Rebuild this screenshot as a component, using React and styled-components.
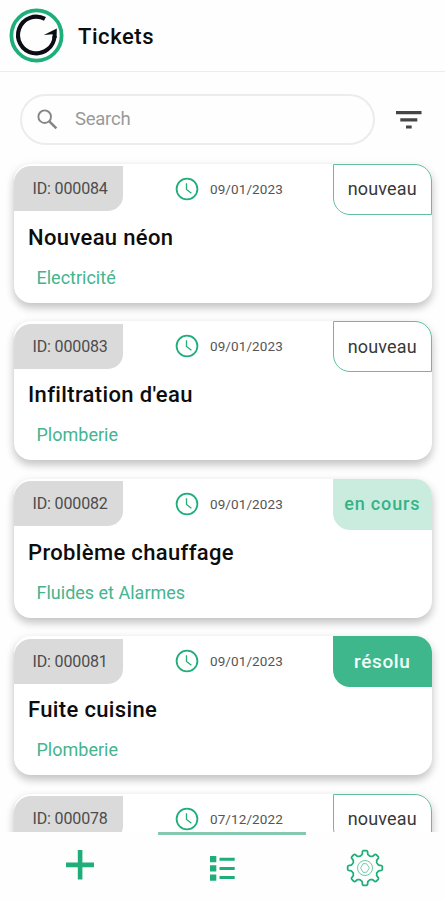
import React from 'react'
import styled, { createGlobalStyle, css } from 'styled-components'

const colors = {
	green: '#1fae7a',
	badgeGreen: '#3fb78c',
	paleGreen: '#caecdf',
	line: '#ececec',
	chip: '#dadada',
	black: '#0d0d0d'
}

const tickets = [
	{ id: '000084', date: '09/01/2023', title: 'Nouveau néon', category: 'Electricité', status: 'nouveau' },
	{ id: '000083', date: '09/01/2023', title: "Infiltration d'eau", category: 'Plomberie', status: 'nouveau' },
	{ id: '000082', date: '09/01/2023', title: 'Problème chauffage', category: 'Fluides et Alarmes', status: 'en cours' },
	{ id: '000081', date: '09/01/2023', title: 'Fuite cuisine', category: 'Plomberie', status: 'résolu' },
	{ id: '000078', date: '07/12/2022', status: 'nouveau' }
]

const Logo = () => (
	<svg width="55" height="55" viewBox="0 0 55 55" fill="none">
		<circle cx="27.5" cy="27.5" r="25.1" stroke={colors.green} strokeWidth="3.8" />
		<path d="M36 10.9A18.3 18.3 0 1 0 45.6 28" stroke="#0c0c14" strokeWidth="4.1" />
		<path d="M34.8 27 47.8 20.6 47.6 30h-4.1l.1-3.8z" fill="#0c0c14" />
	</svg>
)

const SearchIcon = () => (
	<svg width="21" height="21" viewBox="0 0 21 21" fill="none" stroke="#858585">
		<circle cx="7.7" cy="7.7" r="6.3" strokeWidth="1.9" />
		<path d="M12.3 12.3 19.4 19.4" strokeWidth="2.5" />
	</svg>
)

const FilterIcon = () => (
	<svg width="26" height="18" viewBox="0 0 26 18" fill="#454545">
		<path d="M0 0h25.5v3.2H0zM4.3 7.2h17v3.2h-17zM10 14.5h5.7v3.1H10z" />
	</svg>
)

const ClockIcon = () => (
	<svg width="24" height="24" viewBox="0 0 24 24" fill="none" stroke={colors.green}>
		<circle cx="12" cy="12" r="10.4" strokeWidth="1.8" />
		<path d="M11.5 6.2v6.2l4.9 3.8" strokeWidth="1.3" />
	</svg>
)

const PlusIcon = () => (
	<svg width="28" height="30" viewBox="0 0 28 30" fill={colors.green}>
		<path d="M11.8 0h4.6v12.4H28v4.8H16.4v12.3h-4.6V17.2H0v-4.8h11.8z" />
	</svg>
)

const ListIcon = () => (
	<svg width="25" height="25" viewBox="0 0 25 25" fill={colors.green}>
		<path d="M0 0h6.3v6.3H0zM0 9.3h6.3v6.3H0zM0 18.4h6.3v6.3H0z" />
		<path d="M9.5 1.7h15.2v3H9.5zM9.5 10.9h15.2v3H9.5zM9.5 20h15.2v3H9.5z" />
	</svg>
)

// one tooth for each 45 degrees, in polar coordinates
const gearPath = [0, 45, 90, 135, 180, 225, 270, 315].map((angle, i) => {
	const p = (r, offset) => {
		const a = ((angle + offset) * Math.PI) / 180
		return `${(r * Math.sin(a)).toFixed(2)} ${(-r * Math.cos(a)).toFixed(2)}`
	}
	return `${i ? 'L' : 'M'}${p(13.4, -16)}Q${p(13.5, -11)} ${p(15.3, -10)}Q${p(17.4, -9)} ${p(17.4, -5)}L${p(17.4, 5)}Q${p(17.4, 9)} ${p(15.3, 10)}Q${p(13.5, 11)} ${p(13.4, 16)}Q${p(12.1, 22.5)} ${p(13.4, 29)}`
}).join('') + 'Z'

const GearIcon = () => (
	<svg width="38" height="38" viewBox="-19 -19 38 38" fill="none" stroke={colors.green}>
		<path d={gearPath} strokeWidth="1.8" strokeLinejoin="round" />
		<circle r="7.5" strokeWidth="1" opacity="0.65" />
		<path d="M-2-4.3H1.6L4.4 0 1.6 4.3H-2L-4.4 0z" strokeWidth="1" opacity="0.6" />
	</svg>
)

const Ticket = ({ ticket }) => (
	<Card>
		<CardTop>
			<IdChip>ID: {ticket.id}</IdChip>
			<DateBox>
				<ClockIcon />
				<span>{ticket.date}</span>
			</DateBox>
			<Badge $status={ticket.status}>{ticket.status}</Badge>
		</CardTop>
		{ticket.title && <CardTitle>{ticket.title}</CardTitle>}
		{ticket.category && <Category>{ticket.category}</Category>}
	</Card>
)

export default function App() {
	return (
		<Screen>
			<GlobalStyle />
			<Header>
				<Logo />
				<h1>Tickets</h1>
			</Header>
			<SearchRow>
				<SearchBox>
					<SearchIcon />
					<span>Search</span>
				</SearchBox>
				<FilterIcon />
			</SearchRow>
			<TicketList>
				{tickets.map((ticket) => (
					<Ticket key={ticket.id} ticket={ticket} />
				))}
			</TicketList>
			<Indicator />
			<TabBar>
				<Tab $lift={6}><PlusIcon /></Tab>
				<Tab><ListIcon /></Tab>
				<Tab><GearIcon /></Tab>
			</TabBar>
		</Screen>
	)
}

const GlobalStyle = createGlobalStyle`
	* {
		box-sizing: border-box;
	}

	body {
		margin: 0;
		background: #fefefe;
		font-family: Roboto, sans-serif;
	}

	svg {
		display: block;
		flex-shrink: 0;
	}
`

const Screen = styled.div`
	width: 445px;
	height: 900px;
	display: flex;
	flex-direction: column;
	overflow: hidden;
`

const Header = styled.header`
	height: 72px;
	flex-shrink: 0;
	display: flex;
	align-items: center;
	gap: 14px;
	padding-left: 9px;
	border-bottom: 1.5px solid ${colors.line};

	h1 {
		margin: 2px 0 0;
		font-size: 22px;
		font-weight: 500;
		letter-spacing: 0.55px;
		color: ${colors.black};
	}
`

const SearchRow = styled.div`
	flex-shrink: 0;
	display: flex;
	align-items: center;
	gap: 21px;
	padding: 22px 0 0 20px;
`

const SearchBox = styled.div`
	width: 355px;
	height: 51px;
	display: flex;
	align-items: center;
	gap: 17px;
	padding-left: 15px;
	border: 2px solid ${colors.line};
	border-radius: 26px;

	span {
		margin-top: -2px;
		font-size: 18.5px;
		letter-spacing: -0.25px;
		color: #999;
	}
`

const TicketList = styled.main`
	flex: 1;
	min-height: 0;
	overflow: hidden;
	display: flex;
	flex-direction: column;
	gap: 18.5px;
	padding: 18.5px 13.5px 0 14px;
`

const Card = styled.article`
	height: 139px;
	flex-shrink: 0;
	background: #fff;
	border-radius: 17px;
	box-shadow: 0 5px 8px rgba(0, 0, 0, 0.2), 0 2px 12px rgba(0, 0, 0, 0.06);
`

const CardTop = styled.div`
	height: 51px;
	display: flex;
	align-items: flex-start;
`

const IdChip = styled.div`
	width: 109px;
	height: 45px;
	margin-top: 2.5px;
	padding-left: 18.5px;
	line-height: 46px;
	font-size: 16px;
	letter-spacing: -0.15px;
	white-space: nowrap;
	color: #4c4c4c;
	background: ${colors.chip};
	border-radius: 17px 0 15px 0;
`

const DateBox = styled.div`
	height: 50px;
	display: flex;
	align-items: center;
	gap: 11px;
	margin-left: 52px;
	font-size: 13.5px;
	letter-spacing: 0.1px;
	color: #555;
`

const badgeStyles = {
	nouveau: css`
		color: #383838;
		background: #fff;
		border: 1.5px solid #62be9d;
		letter-spacing: 0.15px;
	`,
	'en cours': css`
		color: #36b287;
		background: ${colors.paleGreen};
		font-weight: 500;
		letter-spacing: 0.85px;
	`,
	'résolu': css`
		color: #effff9;
		background: ${colors.badgeGreen};
		font-size: 19px;
		font-weight: 500;
		letter-spacing: 0.6px;
	`
}

const Badge = styled.div`
	width: 98.5px;
	height: 51px;
	margin-left: auto;
	padding-bottom: 1px;
	display: flex;
	align-items: center;
	justify-content: center;
	font-size: 18px;
	white-space: nowrap;
	border-radius: 0 17px 0 17px;
	${({ $status }) => badgeStyles[$status]}
`

const CardTitle = styled.h2`
	margin: 9px 0 0 14px;
	font-size: 22px;
	line-height: 28px;
	font-weight: 500;
	letter-spacing: 0.35px;
	color: ${colors.black};
`

const Category = styled.div`
	margin: 14px 0 0 22.5px;
	font-size: 18px;
	line-height: 24px;
	color: #45b48f;
`

const Indicator = styled.div`
	width: 148px;
	height: 3px;
	flex-shrink: 0;
	margin-left: 158px;
	background: #84c9b0;
`

const TabBar = styled.nav`
	height: 65px;
	flex-shrink: 0;
	display: grid;
	grid-template-columns: repeat(3, 142.5px);
	padding: 1px 0 0 9px;
`

const Tab = styled.div`
	display: flex;
	align-items: center;
	justify-content: center;
	padding-bottom: ${({ $lift }) => $lift || 0}px;
`
